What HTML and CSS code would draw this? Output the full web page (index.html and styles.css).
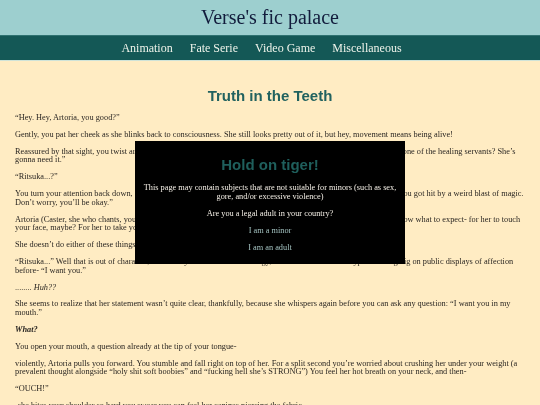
FILE: index.html
```html
<!DOCTYPE html>
<html lang="en">
<head>
<meta charset="utf-8">
<title>Truth in the Teeth - Verse's fic palace</title>
<link rel="stylesheet" href="styles.css">
</head>
<body>
<header class="site-header">
  <div class="site-title">Verse's fic palace</div>
  <nav class="site-nav">
    <a href="#">Animation</a>
    <a href="#">Fate Serie</a>
    <a href="#">Video Game</a>
    <a href="#">Miscellaneous</a>
  </nav>
</header>

<main class="story">
  <h1 class="story-title">Truth in the Teeth</h1>
  <p>“Hey. Hey, Artoria, you good?”</p>
  <p>Gently, you pat her cheek as she blinks back to consciousness. She still looks pretty out of it, but hey, movement means being alive!</p>
  <p>Reassured by that sight, you twist around and call out to the crowds behind you: “Hey! Could anyone go and get me one of the healing servants? She’s gonna need it.”</p>
  <p>“Ritsuka...?”</p>
  <p>You turn your attention back down, smiling down at her. “Yep, it’s your Master. Just stay still for a moment. I think you got hit by a weird blast of magic. Don’t worry, you’ll be okay.”</p>
  <p>Artoria (Caster, she who chants, you remind yourself) is a sweet and gentle girl, always polite, and so by now you know what to expect- for her to touch your face, maybe? For her to take your hand and thank you.</p>
  <p>She doesn’t do either of these things.</p>
  <p>“Ritsuka...” Well that is out of character, she usually isn’t one to be so clingy, and has never been the type for being big on public displays of affection before- “I want you.”</p>
  <p>........ <em>Huh??</em></p>
  <p>She seems to realize that her statement wasn’t quite clear, thankfully, because she whispers again before you can ask any question: “I want you in my<br>mouth.”</p>
  <p><strong><em>What?</em></strong></p>
  <p>You open your mouth, a question already at the tip of your tongue-</p>
  <p>violently, Artoria pulls you forward. You stumble and fall right on top of her. For a split second you’re worried about crushing her under your weight (a prevalent thought alongside “holy shit soft boobies” and “fucking hell she’s STRONG”) You feel her hot breath on your neck, and then-</p>
  <p>“OUCH!”</p>
  <p>-she bites your shoulder so hard you swear you can feel her canines piercing the fabric.</p>
</main>

<div class="age-gate" role="dialog" aria-labelledby="gate-title">
  <h2 id="gate-title" class="gate-title">Hold on tiger!</h2>
  <p>This page may contain subjects that are not suitable for minors (such as sex, gore, and/or excessive violence)</p>
  <p>Are you a legal adult in your country?</p>
  <p><a class="gate-choice" href="#">I am a minor</a></p>
  <p><a class="gate-choice" href="#">I am an adult</a></p>
</div>
</body>
</html>
```

FILE: styles.css
```css
html, body {
  margin: 0;
  padding: 0;
}

body {
  background: #ffecc3;
  color: #2a2622;
  font-family: "Liberation Serif", "DejaVu Serif", serif;
  font-size: 8.3px;
  line-height: 8.6px;
  -webkit-font-smoothing: antialiased;
}

/* header: title band + navigation band */
.site-header {
  display: flex;
  flex-direction: column;
  will-change: transform;
}

.site-title {
  background: #9dcfcf;
  color: #121c3c;
  font-size: 20px;
  line-height: 35px;
  height: 35px;
  text-align: center;
}

.site-nav {
  background: #145856;
  border-top: 1px solid #2f7271;
  border-bottom: 1px solid #cfe3d8;
  height: 24px;
  display: flex;
  justify-content: center;
  align-items: center;
}

.site-nav a {
  color: #eef3ea;
  text-decoration: none;
  font-size: 12px;
  margin-right: 17px;
}

/* story body */
.story {
  padding: 0 15px;
  will-change: transform;
}

.story-title {
  font-family: "Liberation Sans", Arial, sans-serif;
  font-size: 15px;
  line-height: 17px;
  font-weight: bold;
  color: #21625f;
  text-align: center;
  margin: 26px 0 10px;
}

.story p {
  margin: 8.3px 0;
}

/* age confirmation dialog */
.age-gate {
  position: fixed;
  left: 135px;
  top: 141px;
  width: 254px;
  height: 108px;
  padding: 15px 8px 0;
  background: #000;
  color: #f4efe6;
  line-height: 9px;
  text-align: center;
  will-change: transform;
}

.gate-title {
  font-family: "Liberation Sans", Arial, sans-serif;
  font-size: 15px;
  line-height: 17px;
  font-weight: bold;
  color: #1f5f5c;
  margin: 0 0 10px;
}

.age-gate p {
  margin: 8px 0;
}

.gate-title + p {
  margin-top: 0;
}

.gate-choice {
  color: #a3c2c0;
  text-decoration: none;
}
```
